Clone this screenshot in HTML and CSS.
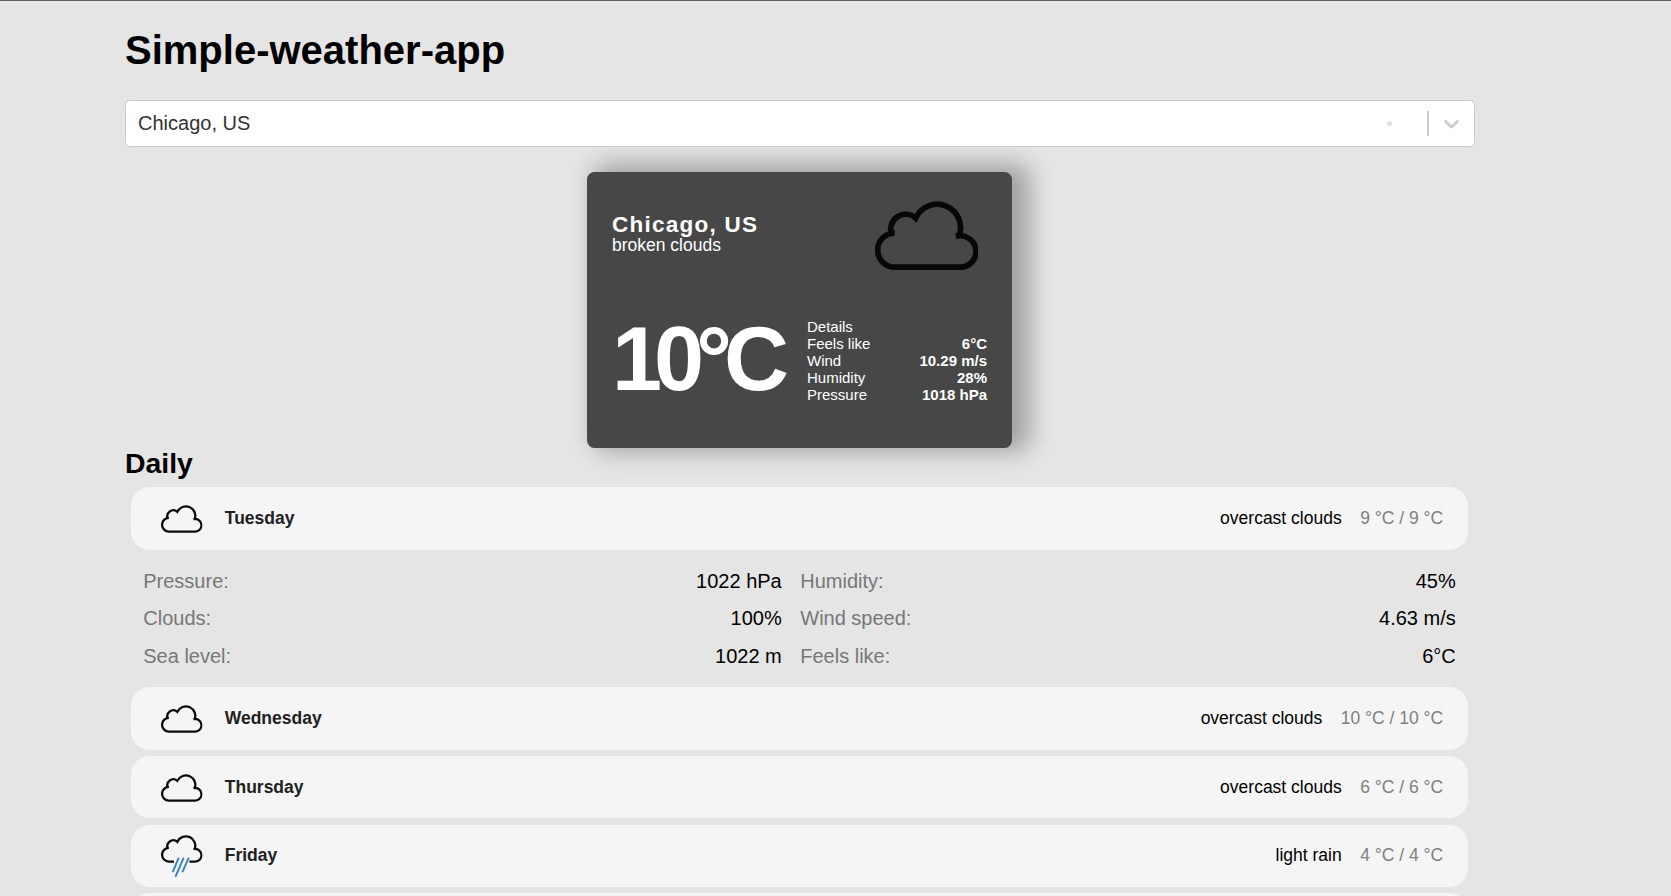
FILE: index.html
```html
<!DOCTYPE html>
<html lang="en">
<head>
<meta charset="utf-8">
<title>Simple-weather-app</title>
<link rel="stylesheet" href="styles.css">
</head>
<body>
<svg class="defs" width="0" height="0" aria-hidden="true">
  <symbol id="cloud" viewBox="254 153 310 208">
    <path d="M313 249A51 51 0 0 0 313 351H508A47 47 0 1 0 496 259M305 256A45 45 0 0 1 376 204A70.2 70.2 0 0 1 504 262" fill="none" stroke="currentColor" stroke-width="17"/>
  </symbol>
  <symbol id="rain" viewBox="254 153 310 315">
    <path d="M313 249A51 51 0 0 0 313 351H351M466 351H508A47 47 0 1 0 496 259M305 256A45 45 0 0 1 376 204A70.2 70.2 0 0 1 504 262" fill="none" stroke="currentColor" stroke-width="17"/>
    <path d="M384 328L344 425M421 328L364 460M459 328L416 425" fill="none" stroke="#3b87bd" stroke-width="15" stroke-linecap="round"/>
  </symbol>
</svg>
<main class="container">
  <h1 class="title">Simple-weather-app</h1>
  <div class="select">
    <span class="select-value">Chicago, US</span>
    <span class="loading-dot"></span>
    <span class="separator"></span>
    <svg class="chevron" viewBox="0 0 20 20"><path d="M4.516 7.548c0.436-0.446 1.043-0.481 1.576 0l3.908 3.747 3.908-3.747c0.533-0.481 1.141-0.446 1.574 0 0.436 0.445 0.408 1.197 0 1.615-0.406 0.418-4.695 4.502-4.695 4.502-0.217 0.223-0.502 0.335-0.787 0.335s-0.57-0.112-0.789-0.335c0 0-4.287-4.084-4.695-4.502s-0.436-1.17 0-1.615z"/></svg>
  </div>
  <section class="card">
    <div class="card-top">
      <div>
        <p class="city">Chicago, US</p>
        <p class="description">broken clouds</p>
      </div>
      <svg class="card-icon"><use href="#cloud"/></svg>
    </div>
    <div class="card-bottom">
      <p class="temperature">10°C</p>
      <div class="details">
        <div class="detail"><span>Details</span></div>
        <div class="detail"><span>Feels like</span><b>6°C</b></div>
        <div class="detail"><span>Wind</span><b>10.29 m/s</b></div>
        <div class="detail"><span>Humidity</span><b>28%</b></div>
        <div class="detail"><span>Pressure</span><b>1018 hPa</b></div>
      </div>
    </div>
  </section>
  <h2 class="subtitle">Daily</h2>
  <section class="daily">
    <div class="day"><svg class="icon"><use href="#cloud"/></svg><b class="name">Tuesday</b><span class="sky">overcast clouds</span><span class="range">9 °C / 9 °C</span></div>
    <div class="panel">
      <div class="fact"><span class="label">Pressure:</span><span>1022 hPa</span></div>
      <div class="fact"><span class="label">Humidity:</span><span>45%</span></div>
      <div class="fact"><span class="label">Clouds:</span><span>100%</span></div>
      <div class="fact"><span class="label">Wind speed:</span><span>4.63 m/s</span></div>
      <div class="fact"><span class="label">Sea level:</span><span>1022 m</span></div>
      <div class="fact"><span class="label">Feels like:</span><span>6°C</span></div>
    </div>
    <div class="day"><svg class="icon"><use href="#cloud"/></svg><b class="name">Wednesday</b><span class="sky">overcast clouds</span><span class="range">10 °C / 10 °C</span></div>
    <div class="day"><svg class="icon"><use href="#cloud"/></svg><b class="name">Thursday</b><span class="sky">overcast clouds</span><span class="range">6 °C / 6 °C</span></div>
    <div class="day"><svg class="icon icon-rain"><use href="#rain"/></svg><b class="name">Friday</b><span class="sky">light rain</span><span class="range">4 °C / 4 °C</span></div>
    <div class="day"></div>
  </section>
</main>
</body>
</html>
```
FILE: styles.css
```css
* { box-sizing: border-box; margin: 0; padding: 0; }
html { height: 100%; overflow: hidden; }
body {
  height: 100%;
  overflow: hidden;
  background: #e5e5e5;
  border-top: 1px solid #625e60;
  font-family: "Liberation Sans", Arial, sans-serif;
  color: #000;
}
.defs { display: block; }
.container { width: 1349.5px; margin-left: 125px; padding-top: 26px; }
.title { font-size: 40px; line-height: 46px; }
.select {
  display: flex;
  align-items: center;
  height: 47px;
  margin-top: 27px;
  padding: 0 9.5px 0 12px;
  background: #fff;
  border: 1px solid #ccc;
  border-radius: 5px;
}
.select-value { flex: 1; font-size: 20px; color: #333; }
.loading-dot { width: 5px; height: 5px; border-radius: 50%; background: #e0e0e0; margin-right: 35px; }
.separator { width: 2px; height: 25px; background: #ccc; margin-right: 10px; }
.chevron { width: 25px; height: 25px; fill: #ccc; }
.card {
  width: 425px;
  height: 276px;
  margin: 25px 0 0 462px;
  padding: 25px;
  border-radius: 7.5px;
  background: #474747;
  color: #fff;
  box-shadow: 12.5px -2.5px 25px 5px rgba(0, 0, 0, .3);
  clip-path: inset(-24px -60px -60px -60px);
}
.card-top { display: flex; justify-content: space-between; height: 120px; padding-top: 15px; }
.city { font-size: 22.5px; line-height: 22.5px; font-weight: bold; letter-spacing: 1.25px; margin-top: 2px; }
.description { font-size: 17.5px; line-height: 17.5px; }
.card-icon { width: 103.5px; height: 69.5px; margin: -11px 9px 0 0; color: #070707; }
.card-bottom { display: flex; justify-content: space-between; }
.temperature { font-size: 90px; line-height: 84px; font-weight: bold; letter-spacing: -8px; }
.details { width: 180px; font-size: 15px; line-height: 17px; padding-top: 1px; }
.detail { display: flex; justify-content: space-between; }
.subtitle { font-size: 28.4px; line-height: 31px; margin-bottom: 2px; }
.daily { display: flex; flex-direction: column; gap: 6.25px; padding: 6px 6.25px 0; }
.day {
  display: flex;
  align-items: center;
  height: 62.5px;
  flex-shrink: 0;
  padding: 0 25px 0 30px;
  border-radius: 18.75px;
  background: #f5f5f5;
  font-size: 17.5px;
}
.icon { width: 41.5px; height: 28px; margin: 2px 22px 0 0; color: #0b0b0b; }
.icon-rain { height: 42.2px; margin-top: 1px; }
.name { flex: 1; color: #212121; }
.sky { margin-right: 18.5px; }
.range { color: #808080; }
.panel {
  display: grid;
  grid-template-columns: 638.5px 655.5px;
  grid-auto-rows: 37.5px;
  column-gap: 18.5px;
  padding: 6.5px 12px 6.2px;
  font-size: 20px;
}
.fact { display: flex; justify-content: space-between; align-items: center; }
.label { color: #777; }
```
